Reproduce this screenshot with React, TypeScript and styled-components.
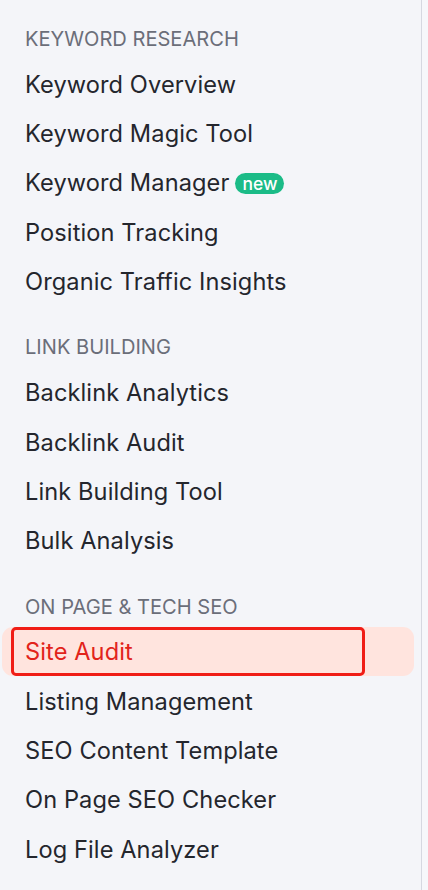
import { FunctionComponent } from 'react'
import styled, { createGlobalStyle } from 'styled-components'

const GlobalStyle = createGlobalStyle`
  html, body {
    margin: 0;
    padding: 0;
    background: #f6f7fa;
  }
  body {
    font-family: Inter, "Noto Sans", "Liberation Sans", sans-serif;
  }
`

type NavItem = { title: string, isNew?: boolean, active?: boolean }
type NavSection = { title: string, items: NavItem[] }

const sections: NavSection[] = [
  {
    title: 'Keyword Research',
    items: [
      { title: 'Keyword Overview' },
      { title: 'Keyword Magic Tool' },
      { title: 'Keyword Manager', isNew: true },
      { title: 'Position Tracking' },
      { title: 'Organic Traffic Insights' }
    ]
  },
  {
    title: 'Link Building',
    items: [
      { title: 'Backlink Analytics' },
      { title: 'Backlink Audit' },
      { title: 'Link Building Tool' },
      { title: 'Bulk Analysis' }
    ]
  },
  {
    title: 'On Page & Tech SEO',
    items: [
      { title: 'Site Audit', active: true },
      { title: 'Listing Management' },
      { title: 'SEO Content Template' },
      { title: 'On Page SEO Checker' },
      { title: 'Log File Analyzer' }
    ]
  }
]

const Sidebar = styled.nav`
  width: 422px;
  min-height: 890px;
  box-sizing: border-box;
  background: #f4f5f9;
  border-right: 1px solid #d6d8e0;
  padding: 0 7px 0 2px;
`

const Section = styled.section`
  padding-top: 29px;

  &:first-child {
    padding-top: 27px;
  }
`

const SectionTitle = styled.h3`
  margin: 0 0 8.5px;
  padding-left: 23px;
  height: 24px;
  line-height: 24px;
  font-size: 20.1px;
  font-weight: 400;
  text-transform: uppercase;
  color: #6b6e79;
`

const ItemList = styled.ul`
  list-style: none;
  margin: 0;
  padding: 0;
`

const Item = styled.li<{ $active?: boolean }>`
  position: relative;
  display: flex;
  align-items: center;
  gap: 6px;
  height: 49.4px;
  padding-left: 23px;
  border-radius: 11px;
  font-size: 23.6px;
  letter-spacing: 0.1px;
  color: ${p => (p.$active ? '#e2231a' : '#24262d')};
  background: ${p => (p.$active ? '#ffe4de' : 'transparent')};
`

const NewBadge = styled.span`
  display: inline-flex;
  align-items: center;
  height: 21px;
  padding: 0 7px;
  border-radius: 11px;
  background: #1bbb87;
  color: #ffffff;
  font-size: 17.5px;
  font-weight: 500;
  letter-spacing: 0;
  margin-top: 1px;
`

const Highlight = styled.span`
  position: absolute;
  left: 9px;
  top: 0;
  width: 354px;
  height: 49px;
  box-sizing: border-box;
  border: 3.5px solid #f01d16;
  border-radius: 5px;
  pointer-events: none;
`

const App: FunctionComponent = () => (
  <>
    <GlobalStyle />
    <Sidebar>
      {sections.map(section => (
        <Section key={section.title}>
          <SectionTitle>{section.title}</SectionTitle>
          <ItemList>
            {section.items.map(item => (
              <Item key={item.title} $active={item.active}>
                {item.title}
                {item.isNew && <NewBadge>new</NewBadge>}
                {item.active && <Highlight />}
              </Item>
            ))}
          </ItemList>
        </Section>
      ))}
    </Sidebar>
  </>
)

export default App
